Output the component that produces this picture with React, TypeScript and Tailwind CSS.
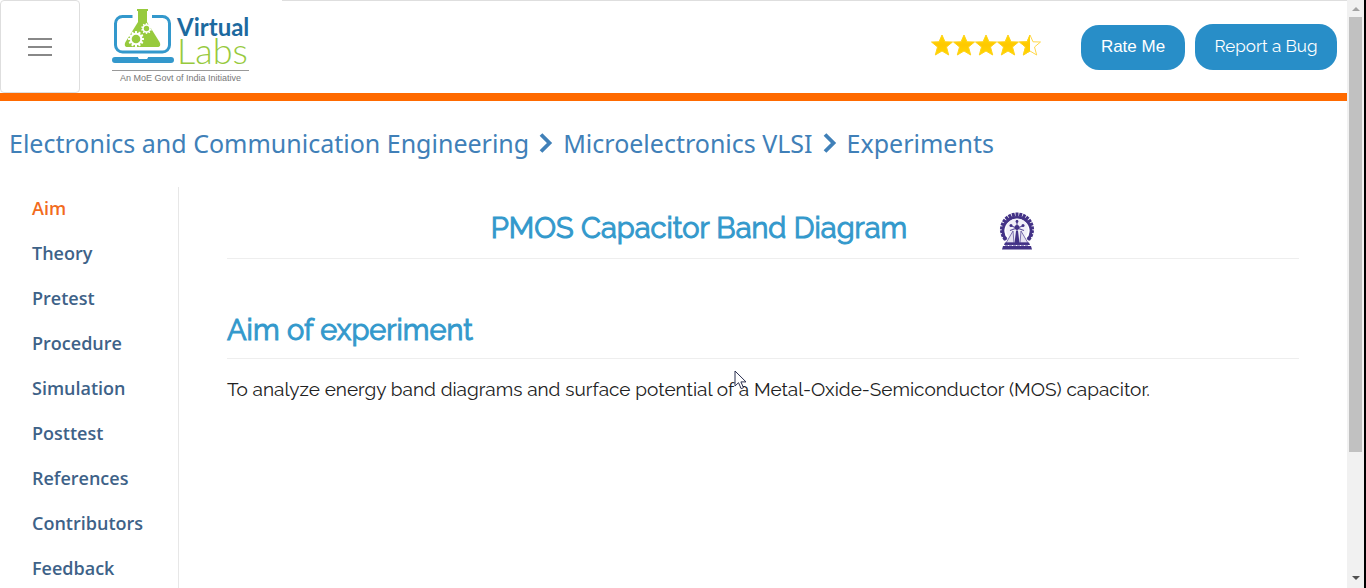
import React from "react";

const navItems = [
  "Aim",
  "Theory",
  "Pretest",
  "Procedure",
  "Simulation",
  "Posttest",
  "References",
  "Contributors",
  "Feedback",
];

const crumbs = [
  "Electronics and Communication Engineering",
  "Microelectronics VLSI",
  "Experiments",
];

function Gear({ cx, cy, r, hole, teeth }: { cx: number; cy: number; r: number; hole: number; teeth: number }) {
  return (
    <g transform={`translate(${cx} ${cy})`}>
      {Array.from({ length: teeth }, (_, i) => (
        <rect
          key={i}
          x={-r * 0.17}
          y={-r * 1.28}
          width={r * 0.34}
          height={r * 0.5}
          fill="#fff"
          transform={`rotate(${(360 / teeth) * i})`}
        />
      ))}
      <circle r={r} fill="#fff" />
      <circle r={hole} fill="#97ca3d" />
    </g>
  );
}

function LaptopMark() {
  return (
    <svg viewBox="0 0 62 56" className="h-14 w-[62px] shrink-0" aria-hidden="true">
      <path
        d="M20.500 8.500H10.500a7 7 0 0 0-7 7V37a7 7 0 0 0 7 7h40a7 7 0 0 0 7-7V15.500a7 7 0 0 0-7-7H40"
        fill="none"
        stroke="#3398cc"
        strokeWidth="3"
      />
      <path
        d="M25 1h11v2h-1v11l12.500 20c1.500 3 .5 5-2 5h-30c-2.500 0-3.500-2-2-5L26 14V3h-1z"
        fill="#97ca3d"
      />
      <Gear cx={24} cy={31} r={6.200} hole={4.300} teeth={12} />
      <Gear cx={34.500} cy={20.500} r={4.200} hole={2.700} teeth={10} />
      <path
        d="M3 49h23c0 1.500 1 2 2 2h6c1 0 2-.5 2-2h23a2.800 2.800 0 0 1 0 6H3a2.800 2.800 0 0 1 0-6z"
        fill="#3398cc"
      />
    </svg>
  );
}

const starPath = "M11 1l3 6.800 7.500.2-6 5 2.200 8-6.700-4-6.700 4 2.200-8-6-5 7.500-.2z";

function Star({ half = false }: { half?: boolean }) {
  return (
    <svg viewBox="0 0 22 22" className="size-[22px]" aria-hidden="true">
      <defs>
        <linearGradient id="gold" x1="0" y1="0" x2="0" y2="1">
          <stop offset="0" stopColor="#ffdc00" />
          <stop offset="0.500" stopColor="#ffc800" />
          <stop offset="1" stopColor="#ffd800" />
        </linearGradient>
        <clipPath id="leftHalf">
          <rect width="11" height="22" />
        </clipPath>
      </defs>
      {half && <path d={starPath} fill="#fff" stroke="#ffd84a" strokeWidth="1" />}
      <path
        d={starPath}
        fill="url(#gold)"
        stroke="#ffd21a"
        strokeWidth="1"
        strokeLinejoin="round"
        clipPath={half ? "url(#leftHalf)" : undefined}
      />
    </svg>
  );
}

function InstituteSeal() {
  return (
    <svg viewBox="0 0 36 38" className="h-[38px] w-9" role="img" aria-label="Institute seal">
      <g fill="#433286">
        {Array.from({ length: 19 }, (_, i) => (
          <rect
            key={i}
            x="16.500"
            y="0.500"
            width="3"
            height="4"
            transform={`rotate(${-126 + i * 14} 18 17.500)`}
          />
        ))}
      </g>
      <path d="M7 28A14 14 0 1 1 29 28" fill="none" stroke="#433286" strokeWidth="2.600" />
      <circle cx="18" cy="17.500" r="11" fill="#f1eff8" />
      <path d="M18 8v20M11 13.500l14 5M25 13.500l-14 5" stroke="#5d4f9a" strokeWidth="1.200" />
      <circle cx="18" cy="15.500" r="2.400" fill="#433286" />
      <circle cx="18" cy="9.500" r="1.400" fill="#433286" />
      <circle cx="12" cy="13.500" r="1.500" fill="#433286" />
      <circle cx="24" cy="13.500" r="1.500" fill="#433286" />
      <path d="M14 19L7 31h8zM22 19l7 12h-8z" fill="#e4e0f0" stroke="#5d4f9a" strokeWidth="0.800" />
      <path d="M17 19h2l1.500 12h-5z" fill="#433286" />
      <path d="M6 30.500h24l1 2.500H5zM4 34h28l1 3.500H3z" fill="#433286" />
      <path d="M6 33.400h24" stroke="#8a7fbd" strokeWidth="1" strokeDasharray="3 1" />
    </svg>
  );
}

function Header() {
  return (
    <header className="flex h-[101px] items-start border-b-8 border-[#ff6a00] bg-white">
      <button
        type="button"
        aria-label="Toggle menu"
        className="flex h-[93px] w-20 shrink-0 items-center justify-center rounded border border-[#dedede]"
      >
        <span className="flex w-6 flex-col gap-1.5">
          <span className="h-0.5 bg-[#888888]" />
          <span className="h-0.5 bg-[#888888]" />
          <span className="h-0.5 bg-[#888888]" />
        </span>
      </button>
      <a href="#home" className="flex w-[202px] shrink-0 flex-col pt-2 pl-8">
        <span className="flex h-[63px] w-[137px] border-b border-[#999999]">
          <LaptopMark />
          <span className="flex flex-col pt-[7px] pl-[3px] whitespace-nowrap">
            <span className="font-['Lato'] text-[24px] leading-6 font-bold text-[#1d6a9f]">Virtual</span>
            <span className="font-['Lato'] text-[36px] leading-[22px] font-light text-[#97ca3d]">Labs</span>
          </span>
        </span>
        <span className="w-[137px] text-center font-['Liberation_Sans'] text-[9px] leading-[14px] whitespace-nowrap text-[#777777]">
          An MoE Govt of India Initiative
        </span>
      </a>
      <div className="flex h-[93px] flex-1 items-center justify-end border-t border-[#dedede] pr-2.5">
        <div className="mr-10 flex pb-1" role="img" aria-label="Rated 4.5 out of 5">
          <Star />
          <Star />
          <Star />
          <Star />
          <Star half />
        </div>
        <button
          type="button"
          className="mr-2.5 h-[45px] w-[104px] rounded-[18px] bg-[#288ec8] font-['Liberation_Sans'] text-[17px] text-white"
        >
          Rate Me
        </button>
        <button
          type="button"
          className="h-[46px] w-[142px] rounded-[18px] bg-[#288ec8] font-['Raleway','Lato',sans-serif] text-[17px] text-white"
        >
          Report a Bug
        </button>
      </div>
    </header>
  );
}

function Breadcrumb() {
  return (
    <nav aria-label="Breadcrumb" className="px-[9px] pt-6">
      <ol className="flex items-center font-['Noto_Sans'] text-[25px] leading-9 whitespace-nowrap text-[#4080b8]">
        {crumbs.map((crumb, i) => (
          <li key={crumb} className="flex items-center">
            {i > 0 && (
              <svg viewBox="0 0 14 20" className="mx-2.5 h-5 w-3.5" aria-hidden="true">
                <path d="M2 1.500l8.500 8.500L2 18.500" fill="none" stroke="#4080b8" strokeWidth="3.800" />
              </svg>
            )}
            <a href="#crumb">{crumb}</a>
          </li>
        ))}
      </ol>
    </nav>
  );
}

function ScrollRail() {
  return (
    <div className="flex w-[19px] shrink-0 flex-col border-r-2 border-black bg-[#f1f1f1]" aria-hidden="true">
      <div className="flex h-[17px] items-center justify-center">
        <svg viewBox="0 0 8 4" className="h-1 w-2"><path d="M0 4L4 0l4 4z" fill="#a3a3a3" /></svg>
      </div>
      <div className="flex flex-1 flex-col px-0.5">
        <div className="h-[79%] bg-[#c1c1c1]" />
      </div>
      <div className="flex h-5 items-center justify-center">
        <svg viewBox="0 0 8 4" className="h-1 w-2"><path d="M0 0l4 4 4-4z" fill="#505050" /></svg>
      </div>
    </div>
  );
}

export default function App() {
  return (
    <div className="flex h-screen overflow-hidden bg-white">
      <div className="min-w-0 flex-1">
        <Header />
        <Breadcrumb />
        <div className="flex pt-[26px]">
          <nav aria-label="Experiment sections" className="w-[179px] shrink-0 border-r border-[#e7e7e7] pl-8">
            <ul className="-mt-px font-['Open_Sans'] text-[18px] leading-[45px] font-semibold text-[#3e6288]">
              {navItems.map((item) => (
                <li key={item}>
                  <a href="#section" className={item === "Aim" ? "text-[#f26b1d]" : ""}>{item}</a>
                </li>
              ))}
            </ul>
          </nav>
          <main className="min-w-0 flex-1 pr-12 pl-12 font-['Raleway','Lato',sans-serif]">
            <div className="flex h-[72px] items-center justify-center border-b border-[#eeeeee] pt-3">
              <h1 className="text-[29px] whitespace-nowrap text-[#3399cc] [-webkit-text-stroke:1px]">PMOS Capacitor Band Diagram</h1>
              <span className="pt-1 pl-[92px]">
                <InstituteSeal />
              </span>
            </div>
            <h2 className="border-b border-[#eeeeee] pt-12 pb-1 text-[29px] leading-[47px] text-[#3399cc] [-webkit-text-stroke:1px]">
              Aim of experiment
            </h2>
            <div className="relative pt-4">
              <p className="text-[19px] leading-7 text-[#212121]">
                To analyze energy band diagrams and surface potential of a Metal-Oxide-Semiconductor (MOS) capacitor.
              </p>
              <svg viewBox="0 0 13 20" className="absolute top-[11px] left-[507px] h-5 w-[13px]" aria-hidden="true">
                <path
                  d="M1 1v15l3.500-3.300 2.700 6 2.300-1-2.600-5.800H12z"
                  fill="#fff"
                  stroke="#2b3050"
                  strokeWidth="1"
                />
              </svg>
            </div>
          </main>
        </div>
      </div>
      <ScrollRail />
    </div>
  );
}
